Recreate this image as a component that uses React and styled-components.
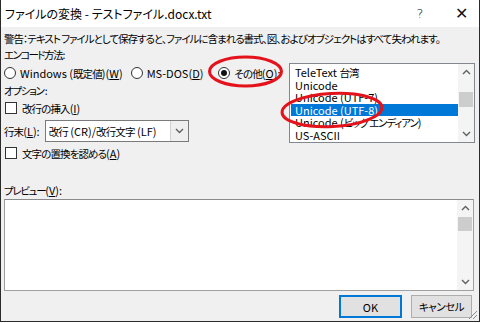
import styled, { createGlobalStyle } from "styled-components";

const GlobalStyle = createGlobalStyle`
  html, body {
    margin: 0;
    padding: 0;
    width: 480px;
    height: 323px;
    overflow: hidden;
    background: #ffffff;
  }
  body {
    font-family: "Noto Sans CJK JP", "Noto Sans", sans-serif;
    font-size: 11px;
    font-feature-settings: "palt";
    color: #000;
  }
`;

const Window = styled.div`
  position: relative;
  width: 480px;
  height: 322px;
  box-sizing: border-box;
  border: 1px solid #2b2b2b;
  border-top: none;
  background: #f0f0f0;
  display: flex;
  flex-direction: column;
  overflow: hidden;
`;

const TitleBar = styled.div`
  height: 27px;
  background: #ffffff;
  display: flex;
  align-items: center;
  padding-left: 4px;
  flex-shrink: 0;
`;

const Title = styled.div`
  flex: 1;
  font-size: 12px;
`;

const TitleButton = styled.div`
  width: ${(p) => p.w}px;
  text-align: center;
  font-size: ${(p) => p.size || 13}px;
  color: #111;
  font-family: "DejaVu Sans", sans-serif;
  font-weight: 300;
`;

/* Japanese runs are set smaller and tighter, like the condensed UI font of the dialog */
const Ja = styled.span`
  font-size: 10.5px;
  letter-spacing: ${(p) => p.ls || "-0.9px"};
`;

const Body = styled.div`
  flex: 1;
  display: flex;
  flex-direction: column;
  padding: 3px 4px 0 3px;
`;

const Line = styled.div`
  height: 16px;
  line-height: 16px;
  white-space: nowrap;
  margin-top: ${(p) => p.mt || 0}px;
`;

const MainRow = styled.div`
  display: flex;
  margin-top: 1px;
`;

const LeftCol = styled.div`
  width: 284px;
  display: flex;
  flex-direction: column;
  padding-top: 2px;
`;

const RadioRow = styled.div`
  display: flex;
  align-items: center;
  height: 16px;
  white-space: nowrap;
`;

const RadioItem = styled.label`
  display: flex;
  align-items: center;
  margin-right: ${(p) => p.mr || 0}px;
`;

const RadioCircle = styled.span`
  position: relative;
  width: 10px;
  height: 10px;
  border: 1px solid #333;
  border-radius: 50%;
  background: #fff;
  margin-right: 4px;
  flex-shrink: 0;
  &::after {
    content: "";
    display: ${(p) => (p.checked ? "block" : "none")};
    position: absolute;
    left: 2px;
    top: 2px;
    width: 6px;
    height: 6px;
    border-radius: 50%;
    background: #111;
  }
`;

const CheckRow = styled.label`
  display: flex;
  align-items: center;
  height: 16px;
  margin-top: ${(p) => p.mt || 0}px;
  white-space: nowrap;
`;

const CheckBox = styled.span`
  width: 10px;
  height: 10px;
  border: 1px solid #333;
  background: #fff;
  margin-right: 5px;
  margin-left: 1px;
  flex-shrink: 0;
`;

const U = styled.span`
  text-decoration: underline;
`;

const SelectRow = styled.div`
  display: flex;
  align-items: center;
  margin-top: 4px;
  white-space: nowrap;
`;

const SelectBox = styled.div`
  margin-left: 5px;
  width: 144px;
  height: 22px;
  box-sizing: border-box;
  border: 1px solid #7a7a7a;
  background: #fff;
  display: flex;
  align-items: center;
`;

const SelectText = styled.div`
  flex: 1;
  padding-left: 3px;
  white-space: nowrap;
`;

const SelectButton = styled.div`
  width: 17px;
  height: 20px;
  border-left: 1px solid #d0d0d0;
  background: #efefef;
  display: flex;
  align-items: center;
  justify-content: center;
`;

const ListBox = styled.div`
  position: relative;
  width: 186px;
  height: 80px;
  box-sizing: border-box;
  border: 1px solid #828790;
  background: #fff;
  margin-left: 1px;
  padding-top: 2px;
  overflow: hidden;
`;

const ListItem = styled.div`
  height: 12.6px;
  line-height: 12.6px;
  width: 168px;
  padding-left: 4px;
  margin-left: 1px;
  box-sizing: border-box;
  white-space: nowrap;
  background: ${(p) => (p.selected ? "#0078d7" : "transparent")};
  color: ${(p) => (p.selected ? "#fff" : "#000")};
`;

const ScrollBar = styled.div`
  position: absolute;
  right: 0;
  top: 0;
  bottom: 0;
  width: 16px;
  background: #f4f4f4;
  display: flex;
  flex-direction: column;
  align-items: center;
`;

const ScrollArrow = styled.div`
  height: 16px;
  width: 16px;
  display: flex;
  align-items: center;
  justify-content: center;
  flex-shrink: 0;
`;

const ScrollTrack = styled.div`
  flex: 1;
  width: 16px;
  position: relative;
`;

const ScrollThumb = styled.div`
  position: absolute;
  left: 1px;
  right: 1px;
  top: ${(p) => p.top}px;
  height: ${(p) => p.h}px;
  background: #cdcdcd;
`;

const PreviewBox = styled.div`
  position: relative;
  margin-top: 1px;
  width: 470px;
  height: 92px;
  box-sizing: border-box;
  border: 1px solid #a0a0a0;
  border-top-color: #8a8a8a;
  background: #fff;
`;

const ButtonRow = styled.div`
  display: flex;
  justify-content: flex-end;
  gap: 9px;
  margin-top: 4px;
  padding-right: 3px;
`;

const Button = styled.div`
  width: ${(p) => p.w}px;
  height: 23px;
  box-sizing: border-box;
  border: ${(p) => (p.primary ? "2px solid #0078d7" : "1px solid #adadad")};
  background: #e1e1e1;
  display: flex;
  align-items: center;
  justify-content: center;
`;

const Annotation = styled.svg`
  position: absolute;
  left: 0;
  top: 0;
  pointer-events: none;
`;

const Grip = styled.svg`
  position: absolute;
  right: 1px;
  bottom: 1px;
`;

const Chevron = ({ up }) => (
  <svg width="9" height="6" viewBox="0 0 9 6">
    <path
      d={up ? "M1 5 L4.5 1.5 L8 5" : "M1 1 L4.5 4.5 L8 1"}
      fill="none"
      stroke="#606060"
      strokeWidth="1.4"
    />
  </svg>
);

const Scroll = ({ thumbTop, thumbH }) => (
  <ScrollBar>
    <ScrollArrow>
      <Chevron up />
    </ScrollArrow>
    <ScrollTrack>
      <ScrollThumb top={thumbTop} h={thumbH} />
    </ScrollTrack>
    <ScrollArrow>
      <Chevron />
    </ScrollArrow>
  </ScrollBar>
);

const encodings = [
  { id: "tt", label: <>TeleText <Ja>台湾</Ja></> },
  { id: "u", label: "Unicode" },
  { id: "u7", label: "Unicode (UTF-7)" },
  { id: "u8", label: "Unicode (UTF-8)", selected: true },
  { id: "ube", label: <>Unicode (<Ja ls="-1.1px">ビッグ エンディアン</Ja>)</> },
  { id: "ascii", label: "US-ASCII" },
];

export default function App() {
  return (
    <>
      <GlobalStyle />
      <Window>
        <TitleBar>
          <Title>ファイルの変換 - テストファイル.docx.txt</Title>
          <TitleButton w={46} size={13}>?</TitleButton>
          <TitleButton w={36} size={16}>✕</TitleButton>
        </TitleBar>
        <Body>
          <Line>
            <Ja ls="-1px">
              警告：テキスト ファイルとして保存すると、ファイルに含まれる書式、図、およびオブジェクトはすべて失われます。
            </Ja>
          </Line>
          <Line>
            <Ja ls="-1.6px">エンコード方法 :</Ja>
          </Line>
          <MainRow>
            <LeftCol>
              <RadioRow>
                <RadioItem mr={8}>
                  <RadioCircle />
                  Windows (<Ja>既定値</Ja>)(<U>W</U>)
                </RadioItem>
                <RadioItem mr={15}>
                  <RadioCircle />
                  MS-DOS(<U>D</U>)
                </RadioItem>
                <RadioItem>
                  <RadioCircle checked />
                  <Ja>その他</Ja>(<U>O</U>):
                </RadioItem>
              </RadioRow>
              <Line mt={1}>
                <Ja ls="-1.3px">オプション :</Ja>
              </Line>
              <CheckRow mt={2}>
                <CheckBox />
                <Ja>改行の挿入</Ja>(<U>I</U>)
              </CheckRow>
              <SelectRow>
                <Ja>行末</Ja>(<U>L</U>):
                <SelectBox>
                  <SelectText>
                    <Ja>改行</Ja> (CR)/<Ja>改行文字</Ja> (LF)
                  </SelectText>
                  <SelectButton>
                    <Chevron />
                  </SelectButton>
                </SelectBox>
              </SelectRow>
              <CheckRow mt={3}>
                <CheckBox />
                <Ja>文字の置換を認める</Ja>(<U>A</U>)
              </CheckRow>
            </LeftCol>
            <ListBox>
              {encodings.map((e) => (
                <ListItem key={e.id} selected={e.selected}>
                  {e.label}
                </ListItem>
              ))}
              <Scroll thumbTop={12} thumbH={15} />
            </ListBox>
          </MainRow>
          <Line mt={21}>
            <Ja ls="-1.3px">プレビュー</Ja>(<U>V</U>):
          </Line>
          <PreviewBox>
            <Scroll thumbTop={1} thumbH={14} />
          </PreviewBox>
          <ButtonRow>
            <Button primary w={63}>OK</Button>
            <Button w={61}>
              <Ja ls="-0.5px">キャンセル</Ja>
            </Button>
          </ButtonRow>
        </Body>
        <Grip width="11" height="11" viewBox="0 0 11 11">
          <path d="M10 2 L2 10 M10 6 L6 10" stroke="#8a8a8a" strokeWidth="1" />
        </Grip>
        <Annotation width="480" height="323" viewBox="0 0 480 323">
          <ellipse
            cx="244.5"
            cy="71.5"
            rx="36"
            ry="14.5"
            fill="none"
            stroke="#e3121b"
            strokeWidth="3"
          />
          <ellipse
            cx="331"
            cy="110"
            rx="50"
            ry="16.5"
            fill="none"
            stroke="#e3121b"
            strokeWidth="3"
            transform="rotate(-3 331 110)"
          />
        </Annotation>
      </Window>
    </>
  );
}
